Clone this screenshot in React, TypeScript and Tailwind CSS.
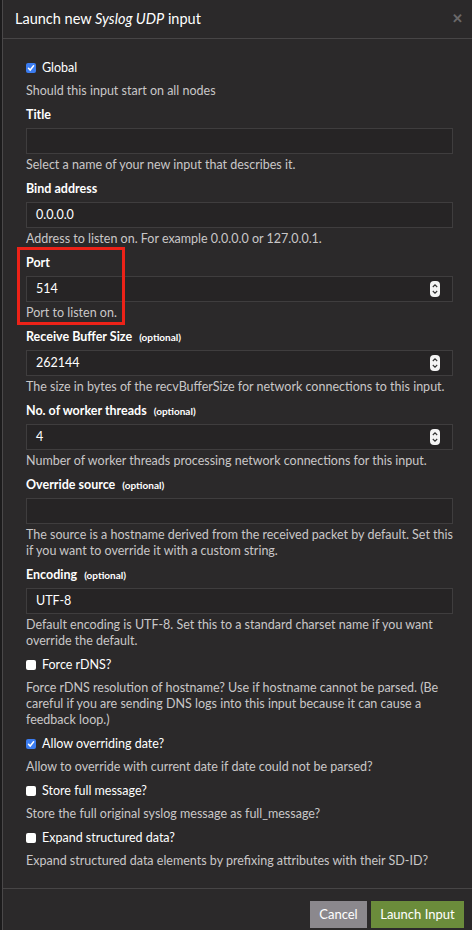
import React from 'react';

type Field = {
  label: string;
  optional?: boolean;
  value?: string;
  number?: boolean;
  help: string[];
  marked?: boolean;
};

type Check = {
  label: string;
  checked: boolean;
  help: string[];
};

const fields1: Field[] = [
  { label: 'Title', help: ['Select a name of your new input that describes it.'] },
  { label: 'Bind address', value: '0.0.0.0', help: ['Address to listen on. For example 0.0.0.0 or 127.0.0.1.'] },
  { label: 'Port', value: '514', number: true, marked: true, help: ['Port to listen on.'] },
  {
    label: 'Receive Buffer Size',
    optional: true,
    value: '262144',
    number: true,
    help: ['The size in bytes of the recvBufferSize for network connections to this input.'],
  },
  {
    label: 'No. of worker threads',
    optional: true,
    value: '4',
    number: true,
    help: ['Number of worker threads processing network connections for this input.'],
  },
  {
    label: 'Override source',
    optional: true,
    help: [
      'The source is a hostname derived from the received packet by default. Set this',
      'if you want to override it with a custom string.',
    ],
  },
  {
    label: 'Encoding',
    optional: true,
    value: 'UTF-8',
    help: ['Default encoding is UTF-8. Set this to a standard charset name if you want', 'override the default.'],
  },
];

const checks: Check[] = [
  {
    label: 'Force rDNS?',
    checked: false,
    help: [
      'Force rDNS resolution of hostname? Use if hostname cannot be parsed. (Be',
      'careful if you are sending DNS logs into this input because it can cause a',
      'feedback loop.)',
    ],
  },
  { label: 'Allow overriding date?', checked: true, help: ['Allow to override with current date if date could not be parsed?'] },
  { label: 'Store full message?', checked: false, help: ['Store the full original syslog message as full_message?'] },
  {
    label: 'Expand structured data?',
    checked: false,
    help: ['Expand structured data elements by prefixing attributes with their SD-ID?'],
  },
];

const Box = ({ checked }: { checked: boolean }) =>
  checked ? (
    <span className="flex h-[10px] w-[10px] items-center justify-center rounded-[2px] bg-[#3b7cf0]">
      <svg width="8" height="8" viewBox="0 0 8 8">
        <path d="M1.5 4.2 L3.2 6 L6.6 1.8" fill="none" stroke="white" strokeWidth="1.5" strokeLinecap="round" />
      </svg>
    </span>
  ) : (
    <span className="h-[10px] w-[10px] rounded-[2px] bg-white" />
  );

const Spinner = () => (
  <svg width="10" height="16" viewBox="0 0 10 16" className="shrink-0">
    <rect x="0" y="0" width="10" height="16" rx="4" fill="#f4f4f4" />
    <path d="M2.8 6 L5 3.8 L7.2 6" fill="none" stroke="#333" strokeWidth="1.1" />
    <path d="M2.8 10 L5 12.2 L7.2 10" fill="none" stroke="#333" strokeWidth="1.1" />
  </svg>
);

const Help = ({ lines }: { lines: string[] }) => (
  <div className="whitespace-nowrap text-[12.5px] leading-[16px] text-[#c9c7c8]">
    {lines.map((l) => (
      <div key={l}>{l}</div>
    ))}
  </div>
);

const FieldRow = ({ f }: { f: Field }) => (
  <div className="relative flex flex-col">
    {f.marked && (
      <div className="pointer-events-none absolute left-[-9px] top-[-8px] h-[78px] w-[108px] border-[3px] border-[#ec2218]" />
    )}
    <div className="flex h-[16px] items-center text-[12.5px] font-bold text-white">
      {f.label}
      {f.optional && <span className="ml-[7px] text-[10px]">(optional)</span>}
    </div>
    <div className="mt-[5px] flex h-[26px] items-center justify-between border border-[#3f3d3e] bg-[#262425] pl-[9px] pr-[12px] text-[12.5px] text-white">
      <span>{f.value ?? ''}</span>
      {f.number && <Spinner />}
    </div>
    <div className="mt-[3px]">
      <Help lines={f.help} />
    </div>
  </div>
);

export default function App() {
  return (
    <div className="flex h-[930px] w-[472px] bg-[#1c1b1c] font-['Lato','Liberation_Sans',sans-serif]">
      <div className="ml-[2px] flex flex-1 flex-col border-l border-[#4a4849] bg-[#2b292a]">
        {/* header */}
        <div className="flex h-[39px] items-center justify-between border-b border-[#474546] pl-[12px] pr-[10px]">
          <h1 className="text-[14.5px] text-white">
            Launch new <i>Syslog UDP</i> input
          </h1>
          <span className="text-[13px] font-bold text-[#6a6869]">✕</span>
        </div>

        {/* body */}
        <div className="flex flex-1 flex-col pl-[23px] pr-[20px] pt-[21px]">
          <div className="flex h-[16px] items-center gap-[6px] text-[12.5px] text-white">
            <Box checked />
            Global
          </div>
          <div className="mt-[7px] mb-[8px]">
            <Help lines={['Should this input start on all nodes']} />
          </div>

          <div className="flex flex-col gap-[8px]">
            {fields1.map((f) => (
              <FieldRow key={f.label} f={f} />
            ))}
            {checks.map((c) => (
              <div key={c.label} className="flex flex-col gap-[7px]">
                <div className="flex h-[16px] items-center gap-[6px] text-[12.5px] text-white">
                  <Box checked={c.checked} />
                  {c.label}
                </div>
                <Help lines={c.help} />
              </div>
            ))}
          </div>
        </div>

        {/* footer */}
        <div className="flex h-[42px] items-start justify-end gap-[4px] border-t border-[#474546] pr-[9px] pt-[12px]">
          <button className="h-[27px] w-[57px] bg-[#8b888d] text-[13px] text-white">Cancel</button>
          <button className="h-[27px] w-[93px] bg-[#6b8c3b] text-[13px] text-white">Launch Input</button>
        </div>
      </div>
    </div>
  );
}
